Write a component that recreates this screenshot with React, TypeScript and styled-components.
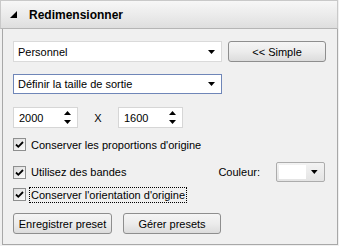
import React from 'react'
import styled, { createGlobalStyle } from 'styled-components'

const GlobalStyle = createGlobalStyle`
  html, body {
    margin: 0;
    padding: 0;
    background: #f0f0f0;
    font-family: 'Liberation Sans', Arial, sans-serif;
    font-size: 11px;
    color: #000;
  }
`

const Panel = styled.div`
  width: 338px;
  height: 245px;
  box-sizing: border-box;
  display: flex;
  flex-direction: column;
`

const Header = styled.div`
  height: 29px;
  box-sizing: border-box;
  display: flex;
  align-items: center;
  gap: 12px;
  padding-left: 9px;
  border: 1px solid #c9c9c9;
  border-bottom-color: #b5b5b5;
  background: linear-gradient(#f7f7f7, #e9e9e9 60%, #dedede);
  font-weight: bold;
  font-size: 12px;
`

const Body = styled.div`
  flex: 1;
  margin-left: 2px;
  box-sizing: border-box;
  border-left: 1px solid #a8a8a8;
  border-right: 1px solid #a8a8a8;
  border-bottom: 1px solid #a8a8a8;
  padding: 11px 0 0 10px;
  display: flex;
  flex-direction: column;
`

const Row = styled.div<{ $mt?: number; $h?: number }>`
  display: flex;
  align-items: center;
  margin-top: ${(p) => p.$mt ?? 0}px;
  height: ${(p) => p.$h ?? 21}px;
`

const Combo = styled.div<{ $focus?: boolean }>`
  width: 209px;
  height: 100%;
  box-sizing: border-box;
  border: 1px solid ${(p) => (p.$focus ? '#6f86b8' : '#dadada')};
  background: #fff;
  display: flex;
  align-items: center;
  justify-content: space-between;
  padding: 0 6px 0 4px;
`

const Button = styled.div<{ $w: number; $ml?: number }>`
  width: ${(p) => p.$w}px;
  height: 21px;
  margin-left: ${(p) => p.$ml ?? 0}px;
  box-sizing: border-box;
  border: 1px solid #8e8e8e;
  border-radius: 3px;
  background: linear-gradient(#f5f5f5, #ececec 50%, #dcdcdc);
  display: flex;
  align-items: center;
  justify-content: center;
`

const Spin = styled.div`
  width: 65px;
  height: 100%;
  box-sizing: border-box;
  border: 1px solid #d6d6d6;
  background: #fff;
  display: flex;
  align-items: center;
  justify-content: space-between;
  padding: 0 6px 0 5px;
`

const XLabel = styled.span`
  width: 40px;
  text-align: center;
`

const Check = styled.div<{ $mt: number }>`
  display: flex;
  align-items: center;
  gap: 4px;
  height: 17px;
  margin-top: ${(p) => p.$mt}px;
`

const Box = styled.div`
  width: 13px;
  height: 13px;
  box-sizing: border-box;
  border: 1px solid #8e8f8f;
  background: linear-gradient(135deg, #dcdcdc, #fbfbfb);
  display: flex;
  align-items: center;
  justify-content: center;
`

const Label = styled.span<{ $focus?: boolean }>`
  padding: 1px 1px;
  outline: ${(p) => (p.$focus ? '1px dotted #000' : 'none')};
`

const Couleur = styled.div`
  margin-left: auto;
  margin-right: 12px;
  display: flex;
  align-items: center;
  gap: 16px;
`

const ColorPick = styled.div`
  width: 49px;
  height: 20px;
  box-sizing: border-box;
  border: 1px solid #acacac;
  border-radius: 2px;
  background: linear-gradient(#f3f3f3, #e4e4e4);
  display: flex;
  align-items: center;
  padding: 2px 6px 2px 2px;
  gap: 5px;
`

const Swatch = styled.div`
  width: 29px;
  height: 100%;
  background: #fff;
`

const Arrow = () => (
  <svg width="7" height="4" viewBox="0 0 7 4">
    <path d="M0 0h7L3.5 4z" fill="#000" />
  </svg>
)

const Updown = () => (
  <svg width="7" height="13" viewBox="0 0 7 13">
    <path d="M3.5 0L7 4H0z M0 9h7L3.5 13z" fill="#000" />
  </svg>
)

const Tick = () => (
  <svg width="9" height="9" viewBox="0 0 9 9">
    <path d="M1 4.5l2.3 2.3L8 2" stroke="#000" strokeWidth="1.8" fill="none" />
  </svg>
)

export default function App() {
  return (
    <>
      <GlobalStyle />
      <Panel>
        <Header>
          <svg width="7" height="7" viewBox="0 0 7 7">
            <path d="M7 0V7H0z" fill="#000" />
          </svg>
          Redimensionner
        </Header>
        <Body>
          <Row $mt={1}>
            <Combo>
              Personnel
              <Arrow />
            </Combo>
            <Button $w={98} $ml={6}>&lt;&lt; Simple</Button>
          </Row>
          <Row $mt={12} $h={20}>
            <Combo $focus>
              Définir la taille de sortie
              <Arrow />
            </Combo>
          </Row>
          <Row $mt={13}>
            <Spin>
              2000
              <Updown />
            </Spin>
            <XLabel>X</XLabel>
            <Spin>
              1600
              <Updown />
            </Spin>
          </Row>
          <Check $mt={8}>
            <Box><Tick /></Box>
            <Label>Conserver les proportions d'origine</Label>
          </Check>
          <Row $mt={9} $h={20}>
            <Box><Tick /></Box>
            <Label style={{ marginLeft: 4 }}>Utilisez des bandes</Label>
            <Couleur>
              Couleur:
              <ColorPick>
                <Swatch />
                <Arrow />
              </ColorPick>
            </Couleur>
          </Row>
          <Check $mt={4}>
            <Box><Tick /></Box>
            <Label $focus>Conserver l'orientation d'origine</Label>
          </Check>
          <Row $mt={10} $h={21}>
            <Button $w={99}>Enregistrer preset</Button>
            <Button $w={98} $ml={11}>Gérer presets</Button>
          </Row>
        </Body>
      </Panel>
    </>
  )
}
